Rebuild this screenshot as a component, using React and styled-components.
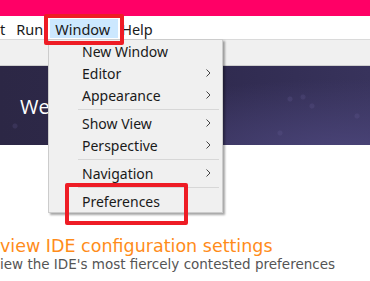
import React from "react";
import styled, { createGlobalStyle } from "styled-components";

const GlobalStyle = createGlobalStyle`
  body {
    margin: 0;
    background: #ffffff;
    overflow: hidden;
  }
`;

const Page = styled.div`
  position: relative;
  width: 370px;
  height: 281px;
  overflow: hidden;
  background: #ffffff;
  font-family: "Noto Sans", "Open Sans", sans-serif;
`;

const TopStrip = styled.div`
  height: 16px;
  background: #ff0066;
`;

const MenuBar = styled.div`
  height: 23px;
  display: flex;
  align-items: flex-start;
  background: #ffffff;
  padding-top: 3px;
  box-sizing: border-box;
`;

const BarItem = styled.div`
  display: flex;
  align-items: center;
  height: 19px;
  padding: ${(p) => p.$pad || "0 6px"};
  font-size: 14.5px;
  color: #1a1a1a;
  background: ${(p) => (p.$open ? "#cce8ff" : "transparent")};
`;

const Toolbar = styled.div`
  height: 27px;
  box-sizing: border-box;
  background: #f0f0f0;
  border-top: 1px solid #dadada;
  border-bottom: 1px solid #cfcfcf;
`;

const Banner = styled.div`
  height: 79px;
  display: flex;
  align-items: center;
  padding-left: 20px;
  box-sizing: border-box;
  background:
    radial-gradient(circle at 290px 33px, rgba(110, 100, 160, 0.22) 0 2px, transparent 3px),
    radial-gradient(circle at 303px 31px, rgba(110, 100, 160, 0.2) 0 2px, transparent 3px),
    radial-gradient(circle at 312px 40px, rgba(110, 100, 160, 0.2) 0 2px, transparent 3px),
    radial-gradient(circle at 357px 50px, rgba(110, 100, 160, 0.2) 0 2px, transparent 3px),
    radial-gradient(circle at 280px 67px, rgba(110, 100, 160, 0.2) 0 2px, transparent 3px),
    radial-gradient(circle at 15px 60px, rgba(110, 100, 160, 0.2) 0 2px, transparent 3px),
    radial-gradient(ellipse at 95% 110%, #4a4478 0%, transparent 60%),
    linear-gradient(90deg, #2c2745 0%, #302b50 60%, #38335c 100%);
`;

const BannerTitle = styled.div`
  font-family: "Open Sans", "Noto Sans", sans-serif;
  font-size: 20px;
  color: #ffffff;
  margin-top: 2px;
`;

const Content = styled.div`
  padding-top: 91px;
  font-family: "DejaVu Sans", sans-serif;
`;

const Heading = styled.div`
  font-size: 17.5px;
  line-height: 20px;
  color: #ff8c1a;
`;

const Subtitle = styled.div`
  font-size: 13.5px;
  line-height: 17px;
  color: #555555;
`;

const Dropdown = styled.div`
  position: absolute;
  left: 48px;
  top: 39px;
  width: 175px;
  box-sizing: border-box;
  padding: 0 2px 0 2px;
  background: #f0f0f0;
  border: 1px solid #cccccc;
  box-shadow: 2px 2px 2px rgba(0, 0, 0, 0.35);
`;

const Item = styled.div`
  height: 22px;
  display: flex;
  align-items: center;
  justify-content: space-between;
  padding: 0 9px 0 31px;
  font-size: 14px;
  color: #1a1a1a;
`;

const Separator = styled.div`
  height: 1px;
  margin: 3px 1px 2px 27px;
  background: #d7d7d7;
`;

const Mark = styled.div`
  position: absolute;
  left: ${(p) => p.$x}px;
  top: ${(p) => p.$y}px;
  width: ${(p) => p.$w}px;
  height: ${(p) => p.$h}px;
  box-sizing: border-box;
  border: 4px solid #ee1c25;
  border-radius: 2px;
`;

const Chevron = () => (
  <svg width="5" height="8" viewBox="0 0 5 8">
    <path d="M0.5 0.5 L4 4 L0.5 7.5" fill="none" stroke="#444" strokeWidth="1" />
  </svg>
);

const menu = [
  { label: "New Window" },
  { label: "Editor", sub: true },
  { label: "Appearance", sub: true },
  { sep: true },
  { label: "Show View", sub: true },
  { label: "Perspective", sub: true },
  { sep: true },
  { label: "Navigation", sub: true },
  { sep: true },
  { label: "Preferences" },
];

export default function App() {
  return (
    <Page>
      <GlobalStyle />
      <TopStrip />
      <MenuBar>
        <BarItem $pad="0">t</BarItem>
        <BarItem $pad="0 7px 0 11px">Run</BarItem>
        <BarItem $open $pad="0 8px 0 5px">
          Window
        </BarItem>
        <BarItem $pad="0 6px 0 3px">Help</BarItem>
      </MenuBar>
      <Toolbar />
      <Banner>
        <BannerTitle>We</BannerTitle>
      </Banner>
      <Content>
        <Heading>view IDE configuration settings</Heading>
        <Subtitle>iew the IDE's most fiercely contested preferences</Subtitle>
      </Content>
      <Dropdown>
        {menu.map((m, i) =>
          m.sep ? (
            <Separator key={i} />
          ) : (
            <Item key={i}>
              <span>{m.label}</span>
              {m.sub && <Chevron />}
            </Item>
          )
        )}
      </Dropdown>
      <Mark $x={44} $y={14} $w={80} $h={31} />
      <Mark $x={65} $y={183} $w={123} $h={42} />
    </Page>
  );
}
